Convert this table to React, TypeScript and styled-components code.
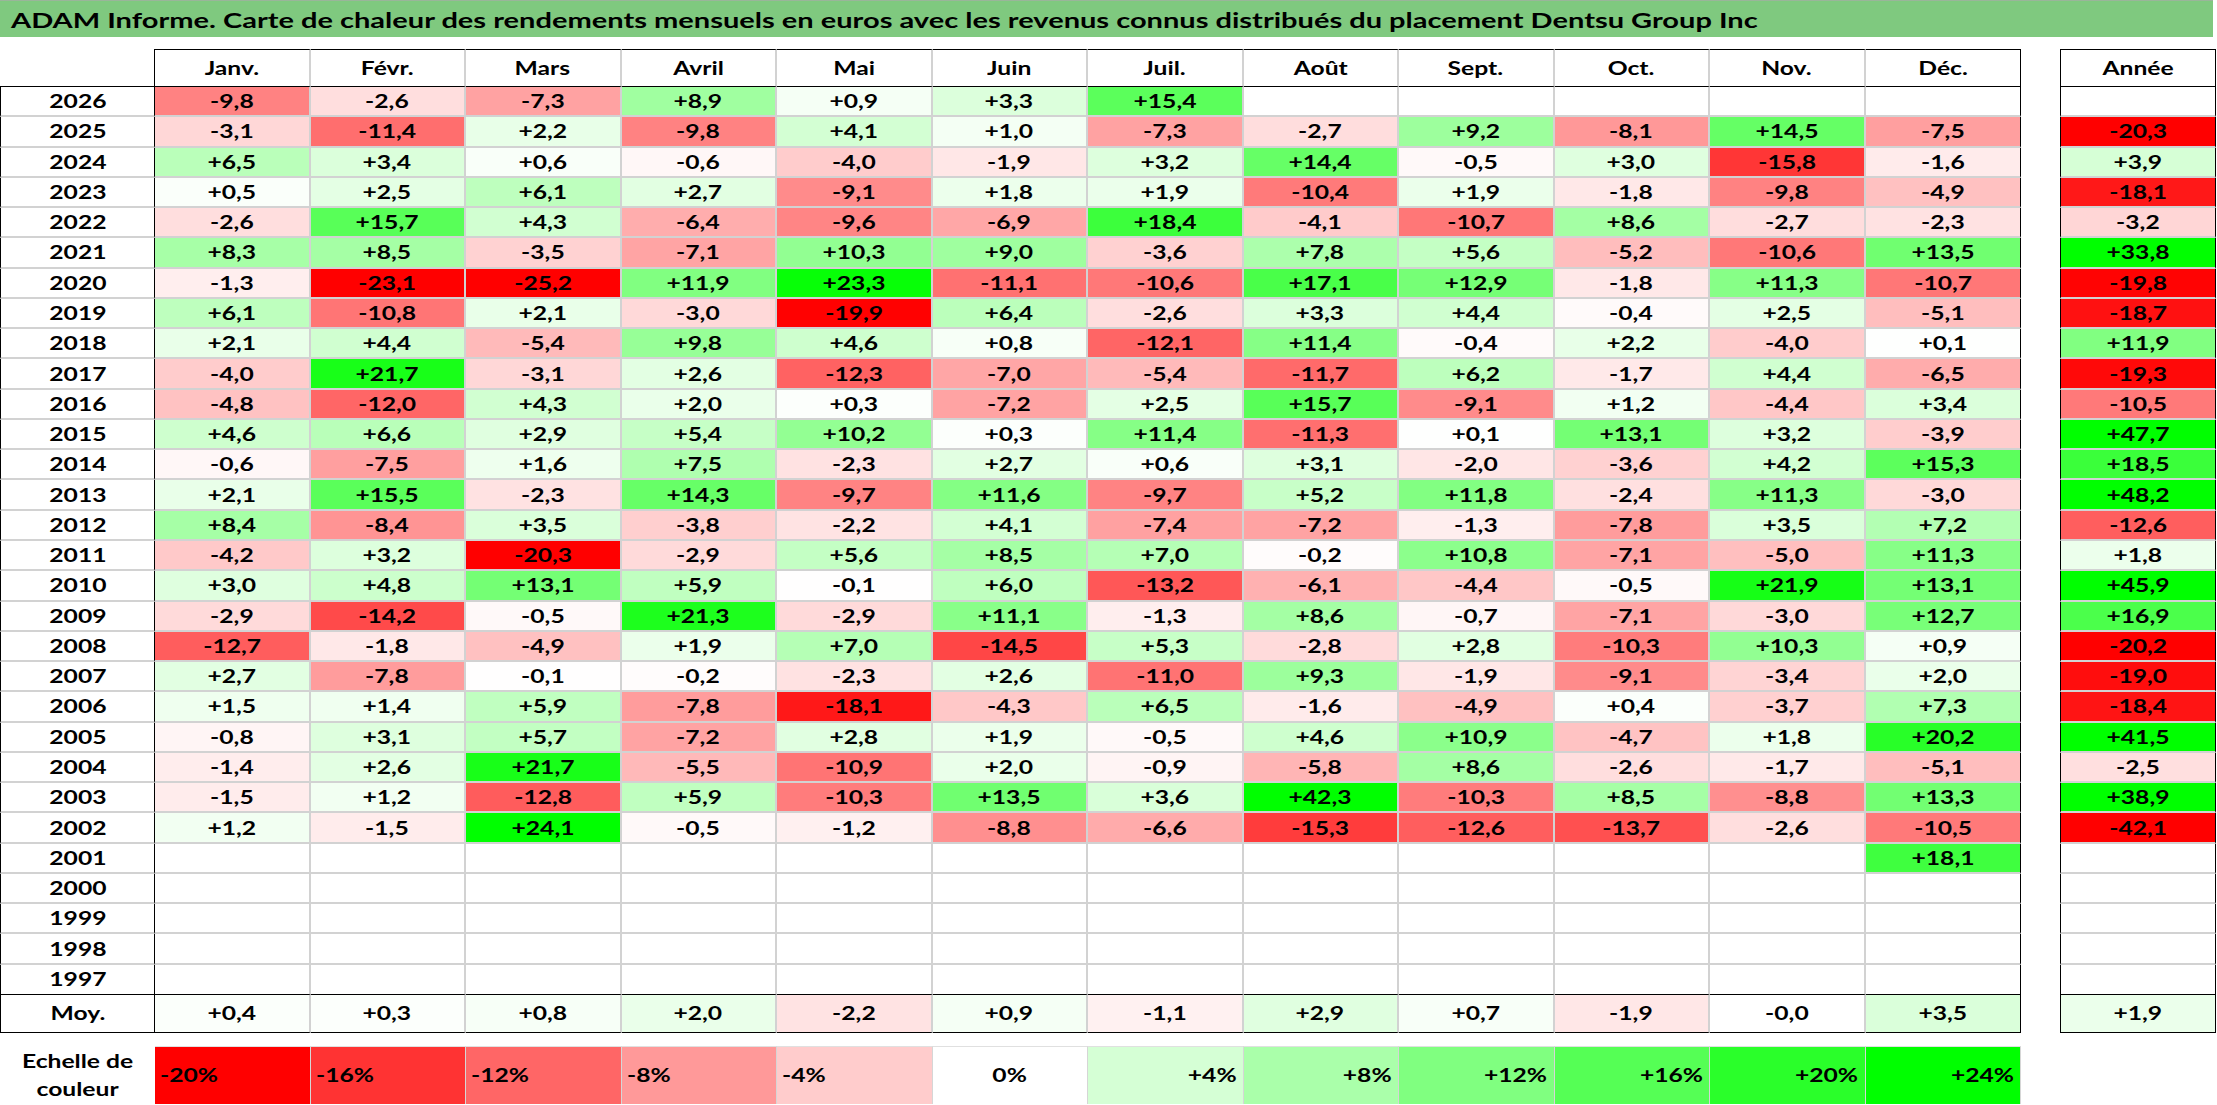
import React from 'react';
import styled, { createGlobalStyle } from 'styled-components';

const GlobalStyle = createGlobalStyle`
  html, body { margin: 0; padding: 0; background: #ffffff; }
  body { font-family: Lato, "Open Sans", "Liberation Sans", sans-serif; color: #000; }
`;

const MONTHS = ['Janv.', 'Févr.', 'Mars', 'Avril', 'Mai', 'Juin', 'Juil.', 'Août', 'Sept.', 'Oct.', 'Nov.', 'Déc.'];

const RAW: [string, string][] = [
  ['2026', '-9,8 -2,6 -7,3 +8,9 +0,9 +3,3 +15,4 _ _ _ _ _ _'],
  ['2025', '-3,1 -11,4 +2,2 -9,8 +4,1 +1,0 -7,3 -2,7 +9,2 -8,1 +14,5 -7,5 -20,3'],
  ['2024', '+6,5 +3,4 +0,6 -0,6 -4,0 -1,9 +3,2 +14,4 -0,5 +3,0 -15,8 -1,6 +3,9'],
  ['2023', '+0,5 +2,5 +6,1 +2,7 -9,1 +1,8 +1,9 -10,4 +1,9 -1,8 -9,8 -4,9 -18,1'],
  ['2022', '-2,6 +15,7 +4,3 -6,4 -9,6 -6,9 +18,4 -4,1 -10,7 +8,6 -2,7 -2,3 -3,2'],
  ['2021', '+8,3 +8,5 -3,5 -7,1 +10,3 +9,0 -3,6 +7,8 +5,6 -5,2 -10,6 +13,5 +33,8'],
  ['2020', '-1,3 -23,1 -25,2 +11,9 +23,3 -11,1 -10,6 +17,1 +12,9 -1,8 +11,3 -10,7 -19,8'],
  ['2019', '+6,1 -10,8 +2,1 -3,0 -19,9 +6,4 -2,6 +3,3 +4,4 -0,4 +2,5 -5,1 -18,7'],
  ['2018', '+2,1 +4,4 -5,4 +9,8 +4,6 +0,8 -12,1 +11,4 -0,4 +2,2 -4,0 +0,1 +11,9'],
  ['2017', '-4,0 +21,7 -3,1 +2,6 -12,3 -7,0 -5,4 -11,7 +6,2 -1,7 +4,4 -6,5 -19,3'],
  ['2016', '-4,8 -12,0 +4,3 +2,0 +0,3 -7,2 +2,5 +15,7 -9,1 +1,2 -4,4 +3,4 -10,5'],
  ['2015', '+4,6 +6,6 +2,9 +5,4 +10,2 +0,3 +11,4 -11,3 +0,1 +13,1 +3,2 -3,9 +47,7'],
  ['2014', '-0,6 -7,5 +1,6 +7,5 -2,3 +2,7 +0,6 +3,1 -2,0 -3,6 +4,2 +15,3 +18,5'],
  ['2013', '+2,1 +15,5 -2,3 +14,3 -9,7 +11,6 -9,7 +5,2 +11,8 -2,4 +11,3 -3,0 +48,2'],
  ['2012', '+8,4 -8,4 +3,5 -3,8 -2,2 +4,1 -7,4 -7,2 -1,3 -7,8 +3,5 +7,2 -12,6'],
  ['2011', '-4,2 +3,2 -20,3 -2,9 +5,6 +8,5 +7,0 -0,2 +10,8 -7,1 -5,0 +11,3 +1,8'],
  ['2010', '+3,0 +4,8 +13,1 +5,9 -0,1 +6,0 -13,2 -6,1 -4,4 -0,5 +21,9 +13,1 +45,9'],
  ['2009', '-2,9 -14,2 -0,5 +21,3 -2,9 +11,1 -1,3 +8,6 -0,7 -7,1 -3,0 +12,7 +16,9'],
  ['2008', '-12,7 -1,8 -4,9 +1,9 +7,0 -14,5 +5,3 -2,8 +2,8 -10,3 +10,3 +0,9 -20,2'],
  ['2007', '+2,7 -7,8 -0,1 -0,2 -2,3 +2,6 -11,0 +9,3 -1,9 -9,1 -3,4 +2,0 -19,0'],
  ['2006', '+1,5 +1,4 +5,9 -7,8 -18,1 -4,3 +6,5 -1,6 -4,9 +0,4 -3,7 +7,3 -18,4'],
  ['2005', '-0,8 +3,1 +5,7 -7,2 +2,8 +1,9 -0,5 +4,6 +10,9 -4,7 +1,8 +20,2 +41,5'],
  ['2004', '-1,4 +2,6 +21,7 -5,5 -10,9 +2,0 -0,9 -5,8 +8,6 -2,6 -1,7 -5,1 -2,5'],
  ['2003', '-1,5 +1,2 -12,8 +5,9 -10,3 +13,5 +3,6 +42,3 -10,3 +8,5 -8,8 +13,3 +38,9'],
  ['2002', '+1,2 -1,5 +24,1 -0,5 -1,2 -8,8 -6,6 -15,3 -12,6 -13,7 -2,6 -10,5 -42,1'],
  ['2001', '_ _ _ _ _ _ _ _ _ _ _ +18,1 _'],
  ['2000', '_ _ _ _ _ _ _ _ _ _ _ _ _'],
  ['1999', '_ _ _ _ _ _ _ _ _ _ _ _ _'],
  ['1998', '_ _ _ _ _ _ _ _ _ _ _ _ _'],
  ['1997', '_ _ _ _ _ _ _ _ _ _ _ _ _'],
];

const AVG = '+0,4 +0,3 +0,8 +2,0 -2,2 +0,9 -1,1 +2,9 +0,7 -1,9 -0,0 +3,5 +1,9'.split(' ');

const SCALE = [
  { label: '-20%', v: -20 },
  { label: '-16%', v: -16 },
  { label: '-12%', v: -12 },
  { label: '-8%', v: -8 },
  { label: '-4%', v: -4 },
  { label: '0%', v: 0 },
  { label: '+4%', v: 4 },
  { label: '+8%', v: 8 },
  { label: '+12%', v: 12 },
  { label: '+16%', v: 16 },
  { label: '+20%', v: 20 },
  { label: '+24%', v: 24 },
];

function heat(v: number): string {
  if (v < 0) {
    const t = Math.min(1, -v / 20);
    const c = Math.round(255 * (1 - t));
    return `rgb(255,${c},${c})`;
  }
  const t = Math.min(1, v / 24);
  const c = Math.round(255 * (1 - t));
  return `rgb(${c},255,${c})`;
}

function cellColor(s: string): string {
  if (s === '_') return '#ffffff';
  return heat(parseFloat(s.replace(',', '.')));
}

const GRID = '2px solid #d2d2d2';
const BLACK = '1px solid #000';

const Page = styled.div`
  width: 2217px;
  height: 1105px;
  display: flex;
  flex-direction: column;
  overflow: hidden;
`;

const TitleBar = styled.div`
  width: 2213px;
  height: 37px;
  box-sizing: border-box;
  background: #7fc97f;
  border-top: 1px solid #9ab59a;
  display: flex;
  align-items: center;
  padding-left: 11px;
`;

const Stretch = styled.span<{ $origin?: string }>`
  display: inline-block;
  white-space: nowrap;
  transform: scaleX(1.37);
  transform-origin: ${(p) => p.$origin ?? 'center'};
`;

const TitleText = styled(Stretch)`
  font-size: 21px;
  font-weight: 700;
  line-height: 1;
  transform: scaleX(1.382);
`;

const Sheet = styled.div`
  margin-top: 12px;
  display: grid;
  grid-template-columns: 155px repeat(12, 155.5px) 39px 156px;
  grid-template-rows: 38px repeat(30, 30.27px) 38px;
`;

type CellProps = {
  $bg?: string;
  $top?: boolean;
  $left?: boolean;
  $right?: boolean;
  $bottom?: boolean;
  $noGrid?: boolean;
};

const Cell = styled.div<CellProps>`
  box-sizing: border-box;
  display: flex;
  align-items: center;
  justify-content: center;
  font-size: 18px;
  font-weight: 700;
  line-height: 1;
  background: ${(p) => p.$bg ?? '#ffffff'};
  border-top: ${(p) => (p.$top ? BLACK : 'none')};
  border-left: ${(p) => (p.$left ? BLACK : 'none')};
  border-right: ${(p) => (p.$right ? BLACK : p.$noGrid ? 'none' : GRID)};
  border-bottom: ${(p) => (p.$bottom ? BLACK : p.$noGrid ? 'none' : GRID)};
`;

const Gap = styled.div`
  background: #ffffff;
`;

const Legend = styled.div`
  margin-top: 13px;
  display: grid;
  grid-template-columns: 155px repeat(12, 155.5px);
  grid-template-rows: 58px;
`;

const LegendLabel = styled.div`
  display: flex;
  align-items: center;
  justify-content: center;
  text-align: center;
  font-size: 18px;
  font-weight: 700;
  line-height: 28px;
`;

const Swatch = styled.div<{ $bg: string; $align: 'left' | 'center' | 'right' }>`
  box-sizing: border-box;
  display: flex;
  align-items: center;
  justify-content: ${(p) => (p.$align === 'left' ? 'flex-start' : p.$align === 'right' ? 'flex-end' : 'center')};
  padding: 0 6px 0 5px;
  background: ${(p) => p.$bg};
  border-right: 1px solid #d6d6d6;
  border-top: 1px solid #e0e0e0;
  font-size: 18px;
  font-weight: 700;
`;

const Txt: React.FC<{ children: React.ReactNode; origin?: string }> = ({ children, origin }) => (
  <Stretch $origin={origin}>{children}</Stretch>
);

export default function App() {
  const lastIdx = RAW.length - 1;
  return (
    <Page>
      <GlobalStyle />
      <TitleBar>
        <TitleText $origin="left">
          ADAM Informe. Carte de chaleur des rendements mensuels en euros avec les revenus connus distribués du placement Dentsu Group Inc
        </TitleText>
      </TitleBar>
      <Sheet>
        <Cell $noGrid $right $bottom />
        {MONTHS.map((m, i) => (
          <Cell key={m} $top $bottom $right={i === 11}>
            <Txt>{m}</Txt>
          </Cell>
        ))}
        <Gap />
        <Cell $top $bottom $left $right>
          <Txt>Année</Txt>
        </Cell>

        {RAW.map(([year, line], r) => {
          const vals = line.split(' ');
          const last = r === lastIdx;
          return (
            <React.Fragment key={year}>
              <Cell $left $right $bottom={last}>
                <Txt>{year}</Txt>
              </Cell>
              {vals.slice(0, 12).map((v, i) => (
                <Cell key={i} $bg={cellColor(v)} $right={i === 11} $bottom={last}>
                  {v !== '_' && <Txt>{v}</Txt>}
                </Cell>
              ))}
              <Gap />
              <Cell $left $right $bottom={last} $bg={cellColor(vals[12])}>
                {vals[12] !== '_' && <Txt>{vals[12]}</Txt>}
              </Cell>
            </React.Fragment>
          );
        })}

        <Cell $left $right $bottom>
          <Txt>Moy.</Txt>
        </Cell>
        {AVG.slice(0, 12).map((v, i) => (
          <Cell key={i} $bg={cellColor(v)} $right={i === 11} $bottom>
            <Txt>{v}</Txt>
          </Cell>
        ))}
        <Gap />
        <Cell $left $right $bottom $bg={cellColor(AVG[12])}>
          <Txt>{AVG[12]}</Txt>
        </Cell>
      </Sheet>
      <Legend>
        <LegendLabel>
          <Txt>
            Echelle de
            <br />
            couleur
          </Txt>
        </LegendLabel>
        {SCALE.map((s) => {
          const align = s.v < 0 ? 'left' : s.v > 0 ? 'right' : 'center';
          return (
            <Swatch key={s.label} $bg={heat(s.v)} $align={align}>
              <Txt origin={align}>{s.label}</Txt>
            </Swatch>
          );
        })}
      </Legend>
    </Page>
  );
}
